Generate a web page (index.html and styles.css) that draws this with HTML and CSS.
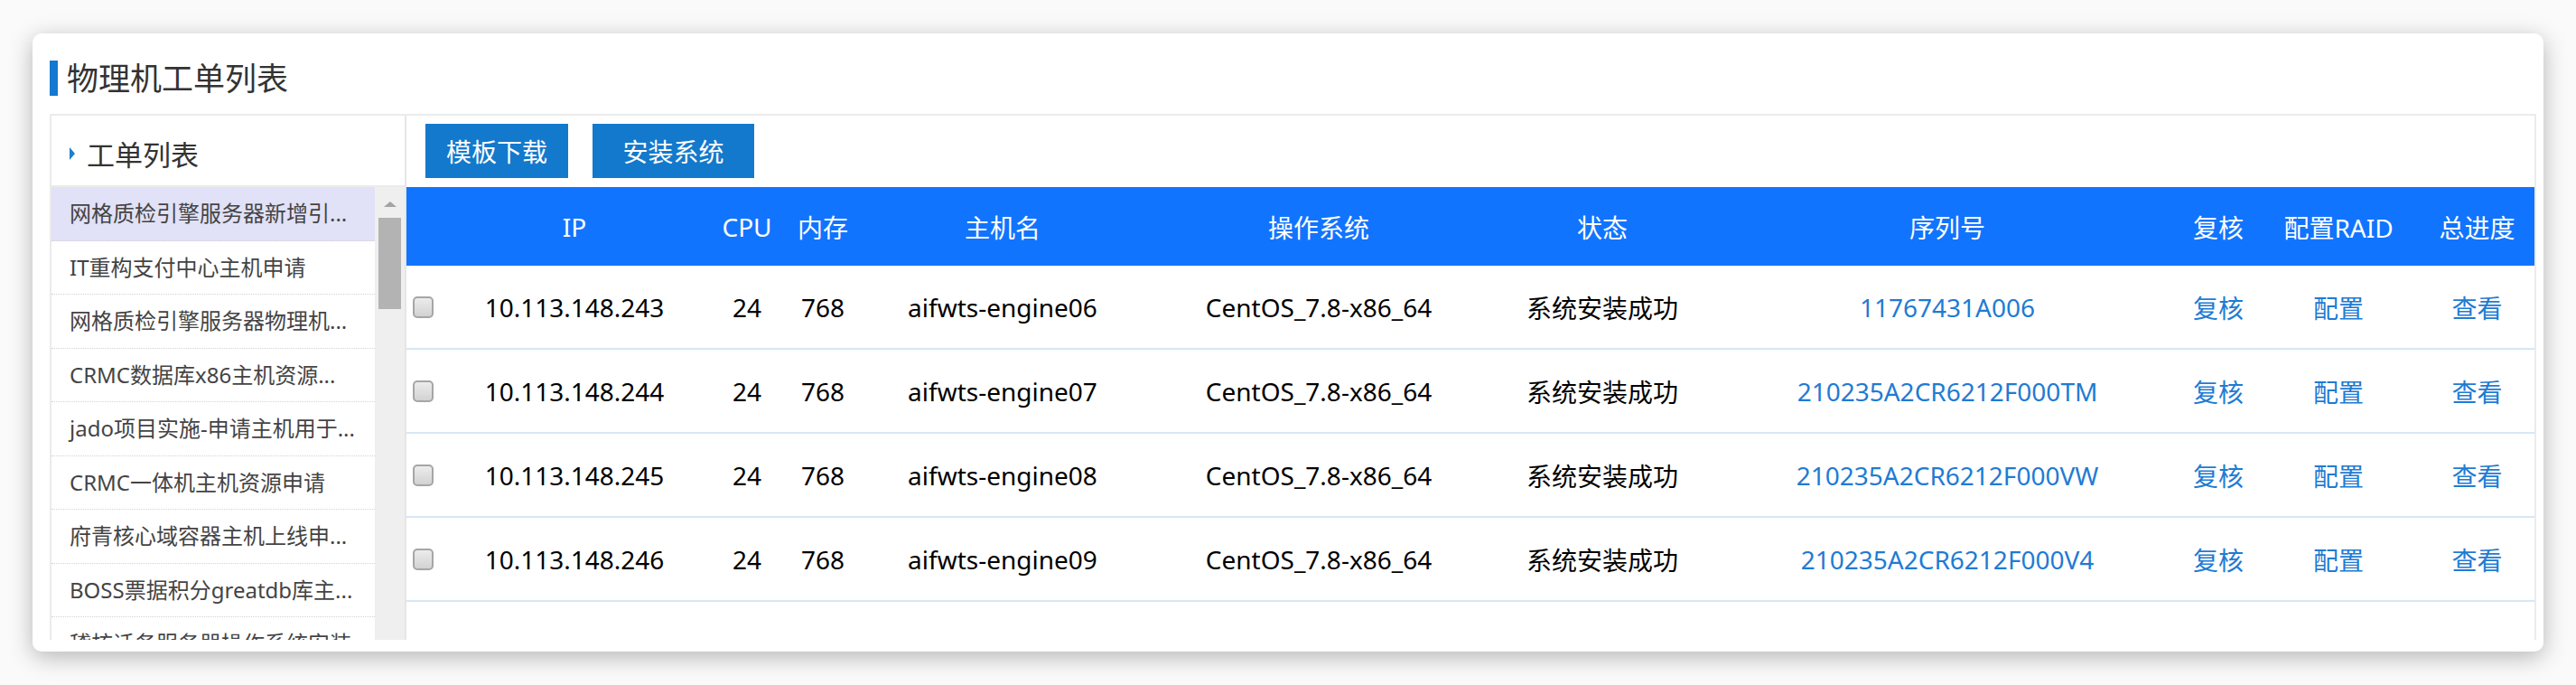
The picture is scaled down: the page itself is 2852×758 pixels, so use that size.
FILE: index.html
```html
<!DOCTYPE html>
<html lang="zh-CN">
<head>
<meta charset="utf-8">
<title>物理机工单列表</title>
<link rel="stylesheet" href="styles.css">
</head>
<body>
<div class="card">
  <h1 class="page-title"><span class="title-bar"></span>物理机工单列表</h1>
  <div class="panel">
    <aside class="sidebar">
      <div class="side-head"><span class="caret"></span>工单列表</div>
      <div class="side-body">
        <ul class="side-list">
          <li class="active">网格质检引擎服务器新增引...</li>
          <li>IT重构支付中心主机申请</li>
          <li>网格质检引擎服务器物理机...</li>
          <li>CRMC数据库x86主机资源...</li>
          <li>jado项目实施-申请主机用于...</li>
          <li>CRMC一体机主机资源申请</li>
          <li>府青核心域容器主机上线申...</li>
          <li>BOSS票据积分greatdb库主...</li>
          <li>稽核话务服务器操作系统安装...</li>
        </ul>
        <div class="scrollbar"><span class="sb-arrow"></span><span class="sb-thumb"></span></div>
      </div>
    </aside>
    <main class="main">
      <div class="toolbar">
        <button class="btn btn-tpl">模板下载</button>
        <button class="btn btn-install">安装系统</button>
      </div>
      <table class="grid">
        <colgroup>
          <col class="c-chk"><col class="c-ip"><col class="c-cpu"><col class="c-mem"><col class="c-host"><col class="c-os"><col class="c-state"><col class="c-sn"><col class="c-review"><col class="c-raid"><col class="c-prog">
        </colgroup>
        <thead>
          <tr><th></th><th>IP</th><th>CPU</th><th>内存</th><th>主机名</th><th>操作系统</th><th>状态</th><th>序列号</th><th>复核</th><th>配置RAID</th><th>总进度</th></tr>
        </thead>
        <tbody>
          <tr>
            <td class="chk"><input type="checkbox" class="cb"></td>
            <td>10.113.148.243</td><td>24</td><td>768</td><td>aifwts-engine06</td><td>CentOS_7.8-x86_64</td><td>系统安装成功</td>
            <td><a class="link" href="#">11767431A006</a></td><td><a class="link" href="#">复核</a></td><td><a class="link" href="#">配置</a></td><td><a class="link" href="#">查看</a></td>
          </tr>
          <tr>
            <td class="chk"><input type="checkbox" class="cb"></td>
            <td>10.113.148.244</td><td>24</td><td>768</td><td>aifwts-engine07</td><td>CentOS_7.8-x86_64</td><td>系统安装成功</td>
            <td><a class="link" href="#">210235A2CR6212F000TM</a></td><td><a class="link" href="#">复核</a></td><td><a class="link" href="#">配置</a></td><td><a class="link" href="#">查看</a></td>
          </tr>
          <tr>
            <td class="chk"><input type="checkbox" class="cb"></td>
            <td>10.113.148.245</td><td>24</td><td>768</td><td>aifwts-engine08</td><td>CentOS_7.8-x86_64</td><td>系统安装成功</td>
            <td><a class="link" href="#">210235A2CR6212F000VW</a></td><td><a class="link" href="#">复核</a></td><td><a class="link" href="#">配置</a></td><td><a class="link" href="#">查看</a></td>
          </tr>
          <tr>
            <td class="chk"><input type="checkbox" class="cb"></td>
            <td>10.113.148.246</td><td>24</td><td>768</td><td>aifwts-engine09</td><td>CentOS_7.8-x86_64</td><td>系统安装成功</td>
            <td><a class="link" href="#">210235A2CR6212F000V4</a></td><td><a class="link" href="#">复核</a></td><td><a class="link" href="#">配置</a></td><td><a class="link" href="#">查看</a></td>
          </tr>
        </tbody>
      </table>
    </main>
  </div>
</div>
</body>
</html>
```
FILE: styles.css
```css
* { box-sizing: border-box; }
html, body { margin: 0; padding: 0; }
body {
  width: 2852px;
  height: 758px;
  overflow: hidden;
  background: #fafafa;
  font-family: "Noto Sans", "Noto Sans CJK SC", sans-serif;
  padding: 37px 0 0 36px;
}
.card {
  width: 2780px;
  height: 684px;
  background: #fff;
  border-radius: 10px;
  box-shadow: 0 6px 26px rgba(0, 0, 0, 0.28);
  padding: 30px 8px 13px 19px;
  display: flex;
  flex-direction: column;
}
.page-title {
  margin: 0;
  height: 39px;
  display: flex;
  align-items: center;
  gap: 10px;
  font-size: 35px;
  line-height: 39px;
  font-weight: normal;
  color: #333;
}
.title-bar {
  width: 9px;
  height: 39px;
  background: #1479d0;
}
.panel {
  margin-top: 20px;
  height: 582px;
  display: flex;
  border: 2px solid #ebebeb;
  border-bottom: 0;
  overflow: hidden;
}
.sidebar {
  width: 393px;
  flex: none;
  display: flex;
  flex-direction: column;
  border-right: 2px solid #e6e6e6;
}
.side-head {
  height: 79px;
  flex: none;
  display: flex;
  align-items: center;
  padding-left: 20px;
  padding-top: 6px;
  font-size: 31px;
  color: #333;
  border-bottom: 2px solid #ebebeb;
}
.caret {
  width: 0;
  height: 0;
  border-top: 7px solid transparent;
  border-bottom: 7px solid transparent;
  border-left: 6px solid #1a7fd0;
  margin-right: 13px;
}
.side-body {
  flex: 1;
  display: flex;
  min-height: 0;
}
.side-list {
  list-style: none;
  margin: 0;
  padding: 0;
  flex: 1;
  overflow: hidden;
}
.side-list li {
  height: 59.5px;
  line-height: 58.5px;
  border-bottom: 1px dotted #d2d2d2;
  padding: 0 10px 0 20px;
  font-size: 24px;
  color: #444;
  white-space: nowrap;
  overflow: hidden;
}
.side-list li.active {
  background: #e1e1f7;
}
.scrollbar {
  width: 33px;
  flex: none;
  background: #efefef;
  display: flex;
  flex-direction: column;
  align-items: center;
}
.sb-arrow {
  margin-top: 16px;
  width: 0;
  height: 0;
  border-left: 7px solid transparent;
  border-right: 7px solid transparent;
  border-bottom: 6px solid #a3a3a3;
}
.sb-thumb {
  margin-top: 12px;
  width: 25px;
  height: 101px;
  background: #b3b3b3;
}
.main {
  flex: 1;
  min-width: 0;
}
.toolbar {
  height: 79px;
  display: flex;
  gap: 27px;
  padding: 9px 0 0 21px;
}
.btn {
  height: 60px;
  border: 0;
  padding: 0;
  background: #1379cc;
  color: #fff;
  font-family: inherit;
  font-size: 28px;
}
.btn-tpl { width: 158px; }
.btn-install { width: 179px; }
.grid {
  width: 2356px;
  table-layout: fixed;
  border-collapse: separate;
  border-spacing: 0;
}
.c-chk { width: 41px; }
.c-ip { width: 290px; }
.c-cpu { width: 92px; }
.c-mem { width: 76px; }
.c-host { width: 322px; }
.c-os { width: 378px; }
.c-state { width: 250px; }
.c-sn { width: 514px; }
.c-review { width: 86px; }
.c-raid { width: 180px; }
.c-prog { width: 127px; }
.grid th {
  height: 87px;
  padding: 0;
  background: #1174fe;
  color: #fff;
  font-weight: normal;
  font-size: 28px;
  text-align: center;
  white-space: nowrap;
}
.grid td {
  height: 93px;
  padding: 0;
  border-bottom: 2px solid #d9e6f5;
  font-size: 28px;
  color: #000;
  text-align: center;
  white-space: nowrap;
}
.grid td.chk {
  text-align: left;
  padding-left: 7px;
}
.cb {
  appearance: none;
  -webkit-appearance: none;
  display: block;
  margin: 0;
  width: 23px;
  height: 24px;
  border: 2px solid #a6a6a6;
  border-radius: 5px;
  background: linear-gradient(#ececec, #d2d2d2);
}
.link {
  color: #1f7bd3;
  text-decoration: none;
}
```
